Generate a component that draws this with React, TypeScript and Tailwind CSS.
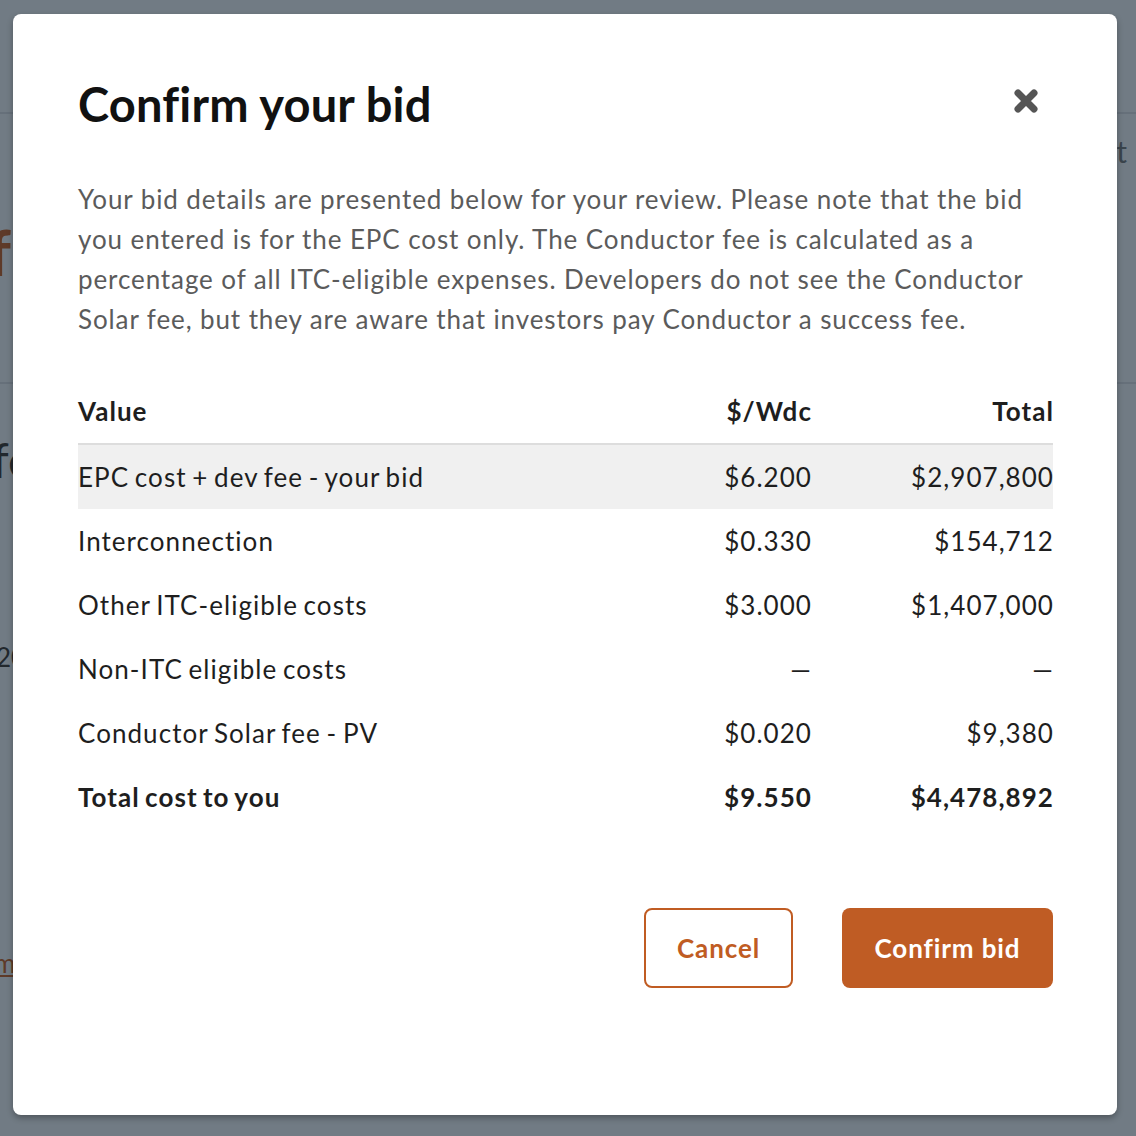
import React from "react";

const rows = [
  { label: "EPC cost + dev fee - your bid", rate: "$6.200", total: "$2,907,800", shade: true },
  { label: "Interconnection", rate: "$0.330", total: "$154,712" },
  { label: "Other ITC-eligible costs", rate: "$3.000", total: "$1,407,000" },
  { label: "Non-ITC eligible costs", rate: "—", total: "—" },
  { label: "Conductor Solar fee - PV", rate: "$0.020", total: "$9,380" },
];

function CloseIcon() {
  return (
    <svg width="26" height="26" viewBox="0 0 26 26">
      <path d="M5 5 L21 21 M21 5 L5 21" stroke="#555555" strokeWidth="7" strokeLinecap="round" />
    </svg>
  );
}

function Row({ label, rate, total, className }: { label: string; rate: string; total: string; className?: string }) {
  return (
    <div className={"flex items-center h-[64px] " + (className || "")}>
      <div className="flex-1">{label}</div>
      <div className="w-[200px] text-right whitespace-nowrap">{rate}</div>
      <div className="w-[242px] text-right whitespace-nowrap -mr-[1px]">{total}</div>
    </div>
  );
}

export default function App() {
  return (
    <div className="relative w-[1136px] h-[1136px] overflow-hidden bg-[#717b84] font-['Lato','Noto_Sans',sans-serif]">
      {/* dimmed page behind the dialog */}
      <div className="flex flex-col">
        <div className="h-[114px] border-b-2 border-[#66707a]" />
        <div className="h-[270px] border-b-2 border-[#66707a] flex justify-between">
          <div className="pt-[106px] -ml-[12px] text-[64px] leading-none font-bold text-[#5e3a28]">f</div>
          <div className="pt-[22px] mr-[9px] text-[30px] leading-none text-[#3a444c]">st</div>
        </div>
        <div className="-ml-[8px] pt-[52px] text-[48px] leading-none text-[#22282d]">fe</div>
        <div className="-ml-[4px] pt-[160px] text-[26px] leading-none text-[#22282d]">20</div>
        <div className="-ml-[6px] pt-[280px] text-[26px] leading-none text-[#5e3a28] underline">m</div>
      </div>

      <div className="absolute left-[13px] top-[14px] w-[1104px] h-[1101px] bg-white rounded-[8px] shadow-[0_3px_6px_rgba(0,0,0,0.3)] pl-[65px] pr-[64px] pt-[62px]">
        <div className="flex items-center justify-between h-[56px]">
          <h1 className="text-[47px] leading-[56px] font-bold text-[#111111] tracking-[0.2px]">Confirm your bid</h1>
          <div className="mr-[14px] -mt-[6px]">
            <CloseIcon />
          </div>
        </div>

        <p className="mt-[47px] text-[26px] leading-[40px] text-[#5b5b5b] tracking-[0.9px]">
          Your bid details are presented below for your review. Please note that the bid you entered is for the EPC
          cost only. The Conductor fee is calculated as a percentage of all ITC-eligible expenses. Developers do not
          see the Conductor Solar fee, but they are aware that investors pay Conductor a success fee.
        </p>

        <div className="mt-[41px] text-[26px] text-[#1e1e1e] tracking-[1.05px] [word-spacing:-2px]">
          <Row label="Value" rate="$/Wdc" total="Total" className="font-bold border-b-2 border-[#dddddd] h-[65px]" />
          {rows.map((r) => (
            <Row key={r.label} label={r.label} rate={r.rate} total={r.total} className={r.shade ? "bg-[#f0f0f0]" : ""} />
          ))}
          <Row label="Total cost to you" rate="$9.550" total="$4,478,892" className="font-bold" />
        </div>

        <div className="mt-[79px] flex justify-end gap-[49px] tracking-[0.9px]">
          <button className="w-[149px] h-[80px] rounded-[8px] border-2 border-[#c05c23] text-[#c05c23] text-[26px] font-bold">
            Cancel
          </button>
          <button className="w-[211px] h-[80px] rounded-[8px] bg-[#bf5c24] text-white text-[26px] font-bold">
            Confirm bid
          </button>
        </div>
      </div>
    </div>
  );
}
